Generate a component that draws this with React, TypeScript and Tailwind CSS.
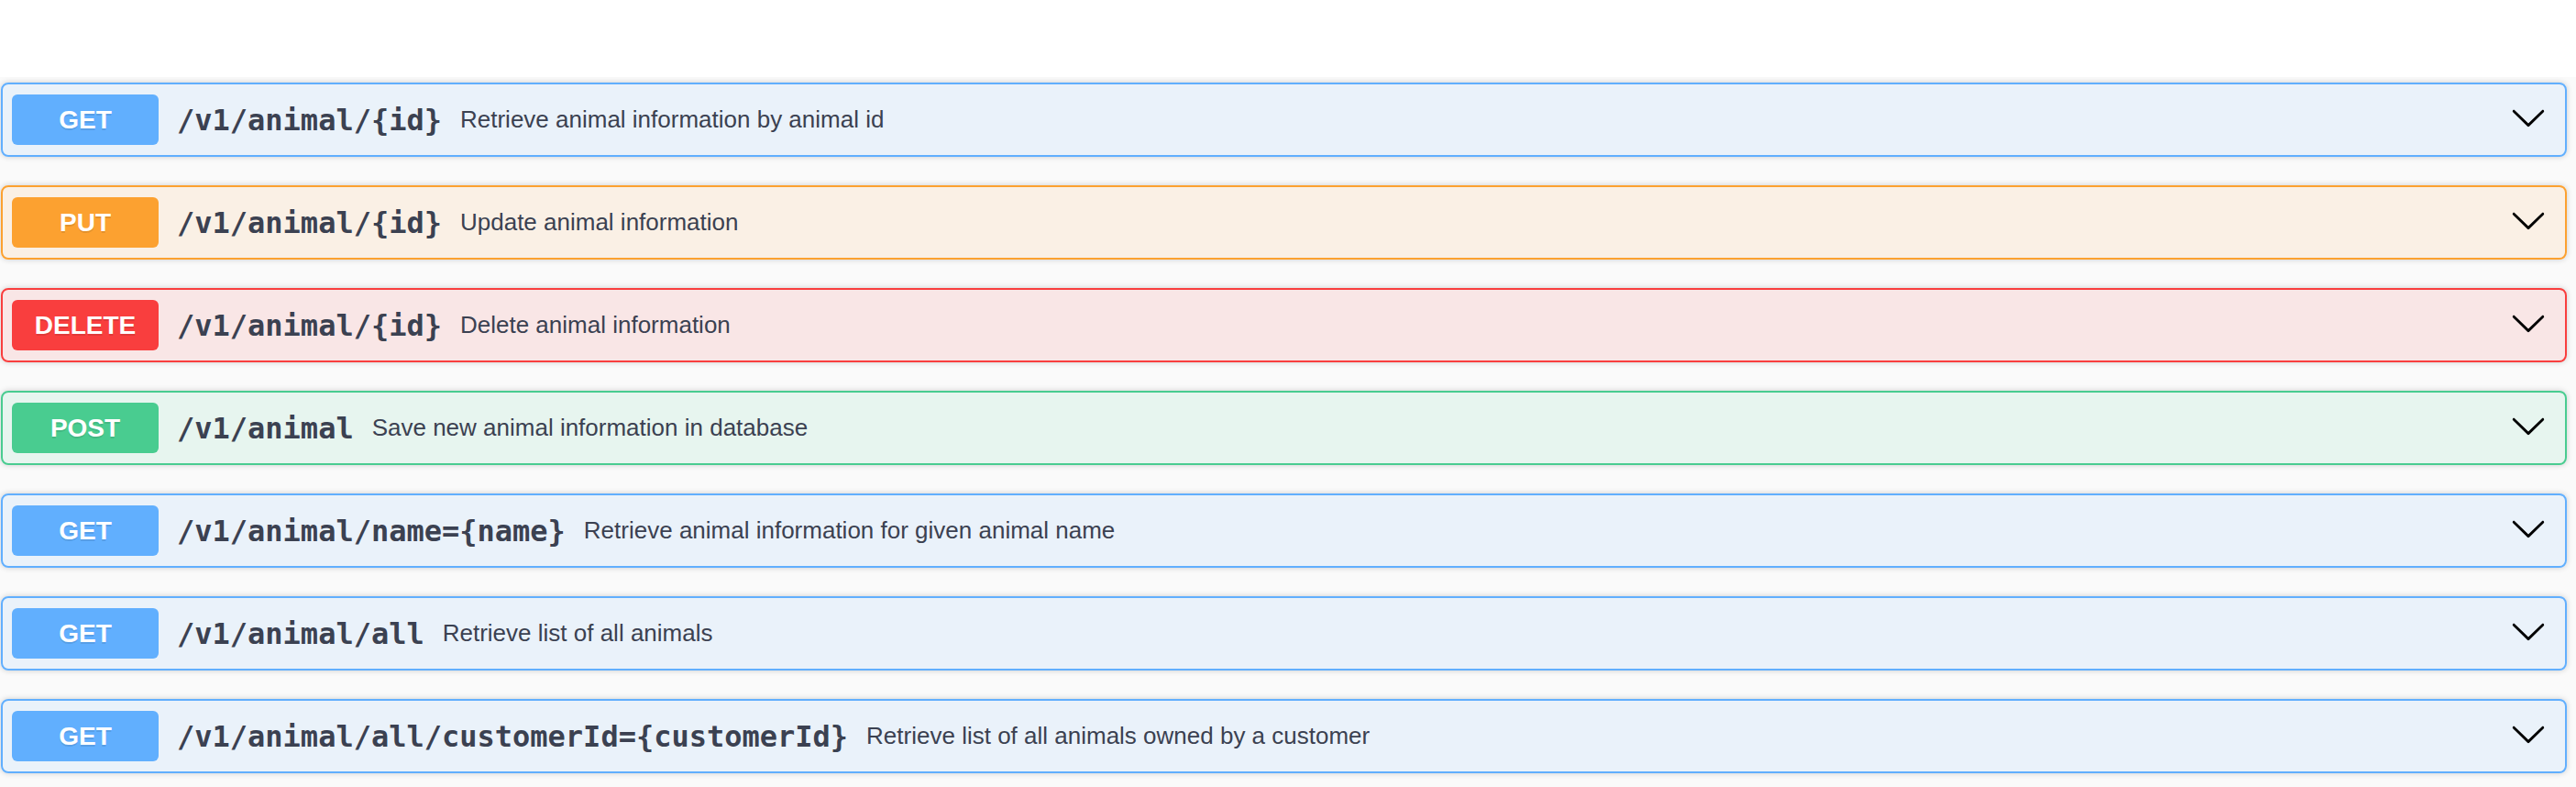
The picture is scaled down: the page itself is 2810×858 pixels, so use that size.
const METHOD_STYLE: Record<string, { row: string; badge: string }> = {
  GET: { row: "border-[#61affe] bg-[#61affe]/10", badge: "bg-[#61affe]" },
  PUT: { row: "border-[#fca130] bg-[#fca130]/10", badge: "bg-[#fca130]" },
  DELETE: { row: "border-[#f93e3e] bg-[#f93e3e]/10", badge: "bg-[#f93e3e]" },
  POST: { row: "border-[#49cc90] bg-[#49cc90]/10", badge: "bg-[#49cc90]" },
};

const OPERATIONS = [
  { method: "GET", path: "/v1/animal/{id}", summary: "Retrieve animal information by animal id" },
  { method: "PUT", path: "/v1/animal/{id}", summary: "Update animal information" },
  { method: "DELETE", path: "/v1/animal/{id}", summary: "Delete animal information" },
  { method: "POST", path: "/v1/animal", summary: "Save new animal information in database" },
  { method: "GET", path: "/v1/animal/name={name}", summary: "Retrieve animal information for given animal name" },
  { method: "GET", path: "/v1/animal/all", summary: "Retrieve list of all animals" },
  {
    method: "GET",
    path: "/v1/animal/all/customerId={customerId}",
    summary: "Retrieve list of all animals owned by a customer",
  },
];

function Chevron() {
  return (
    <svg width="40" height="40" viewBox="0 0 20 20" className="shrink-0 fill-black">
      <path d="M17.418 6.109c.272-.268.709-.268.979 0s.271.701 0 .969l-7.908 7.83c-.27.268-.707.268-.979 0l-7.908-7.83c-.27-.268-.27-.701 0-.969.271-.268.709-.268.979 0L10 13.25l7.418-7.141z" />
    </svg>
  );
}

function OperationRow({ method, path, summary }: { method: string; path: string; summary: string }) {
  const style = METHOD_STYLE[method];
  return (
    <div
      className={`flex h-[81px] items-center rounded-[8px] border-2 px-[10px] shadow-[0_0_6px_rgba(0,0,0,0.19)] ${style.row}`}
    >
      <span
        className={`w-[160px] shrink-0 rounded-[6px] py-[12px] text-center text-[28px] font-bold leading-[31px] text-white [text-shadow:0_2px_0_rgba(0,0,0,0.1)] ${style.badge}`}
        style={{ fontFamily: '"Liberation Sans", Arial, sans-serif' }}
      >
        {method}
      </span>
      <span
        className="px-[20px] text-[32px] font-bold text-[#3b4151]"
        style={{ fontFamily: '"DejaVu Sans Mono", monospace' }}
      >
        {path}
      </span>
      <span
        className="flex-1 text-[26px] text-[#3b4151]"
        style={{ fontFamily: '"Liberation Sans", Arial, sans-serif' }}
      >
        {summary}
      </span>
      <div className="mr-[10px] -mt-[6px]">
        <Chevron />
      </div>
    </div>
  );
}

export default function App() {
  return (
    <div className="flex min-h-screen flex-col bg-white">
      <div className="h-[84px]" />
      <div className="flex flex-1 flex-col gap-[31px] bg-[#fafafa] pb-[15px] pl-[1px] pr-[10px] pt-[6px]">
        {OPERATIONS.map((op, i) => (
          <OperationRow key={i} {...op} />
        ))}
      </div>
    </div>
  );
}
